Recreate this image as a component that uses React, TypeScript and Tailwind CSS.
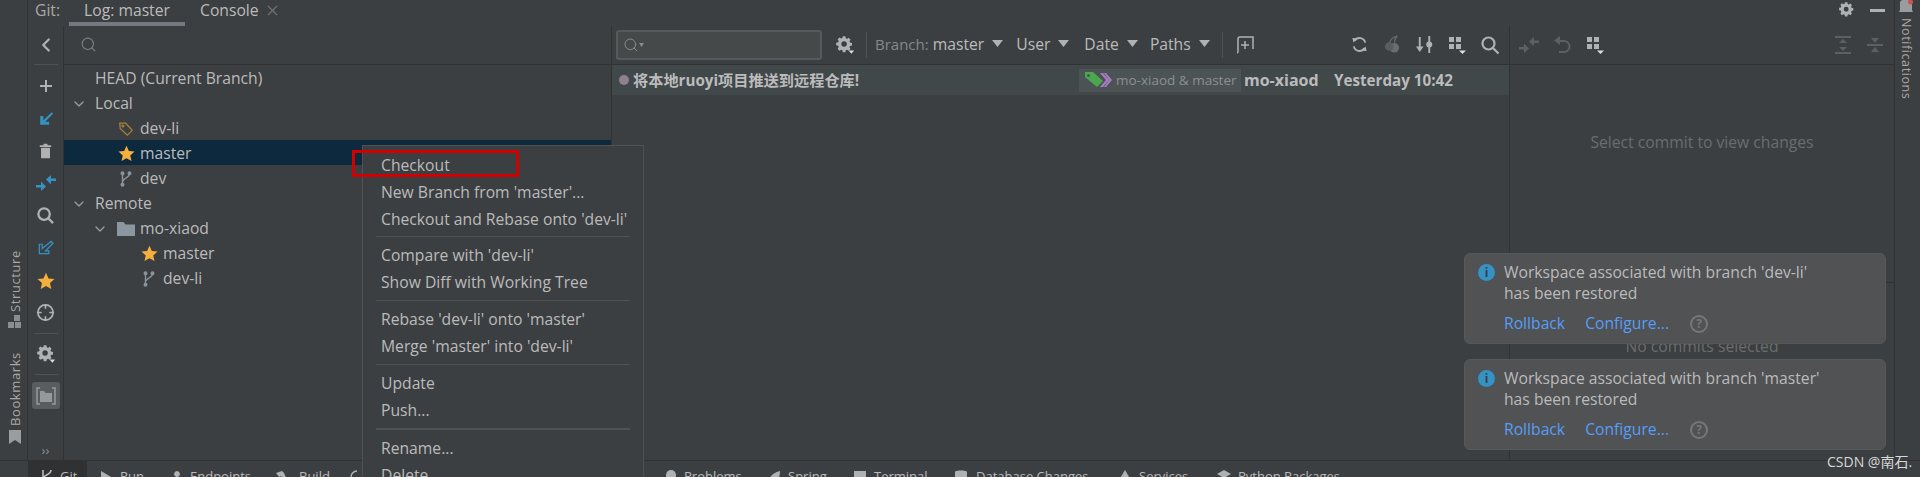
import { ChevronDown, ChevronLeft, Search } from "lucide-react";

const gray = "#afb1b3";
const blue = "#3592c4";

function Gear({ size = 18, color = gray, caret = false }: { size?: number; color?: string; caret?: boolean }) {
  return (
    <svg width={size} height={size} viewBox="0 0 22 22">
      <path
        fill={color}
        fillRule="evenodd"
        d="M8.6 1.5h2.8l.5 2.2 1.3.6 1.9-1.2 2 2-1.2 1.9.6 1.3 2.2.5v2.8l-2.2.5-.6 1.3 1.2 1.9-2 2-1.9-1.2-1.3.6-.5 2.2H8.6l-.5-2.2-1.3-.6-1.9 1.2-2-2L4.1 13l-.6-1.3-2.2-.5V8.4l2.2-.5.6-1.3-1.2-1.9 2-2 1.9 1.2 1.3-.6zM10 7a3 3 0 1 0 0 6 3 3 0 0 0 0-6z"
      />
      {caret && <path fill="#ddd" d="M15 17h6l-3 3.5z" />}
    </svg>
  );
}

function MergeIcon({ color }: { color: string }) {
  return (
    <svg width="20" height="18" viewBox="0 0 20 18">
      <path fill={color} d="M10 5.500L15 1v3.500h5v2.500h-5v3.500zM10 12.500L5 17v-3.500H0V11h5V7.500z" />
    </svg>
  );
}

function BranchIcon() {
  return (
    <svg width="14" height="18" viewBox="0 0 16 18" fill="none" stroke="#8a949c" strokeWidth="1.6">
      <path d="M4 3v12M12 3c0 5-7 4-8 9" />
      <circle cx="4" cy="2.5" r="1.5" fill="#8a949c" />
      <circle cx="4" cy="15.5" r="1.5" fill="#8a949c" />
      <circle cx="12" cy="2.5" r="1.5" fill="#8a949c" />
    </svg>
  );
}

function StarIcon({ size = 17 }: { size?: number }) {
  return (
    <svg width={size} height={size} viewBox="0 0 18 18">
      <path fill="#f4af3d" d="M9 .8l2.5 5.6 6 .6-4.5 4 1.3 6L9 13.9 3.7 17l1.3-6L.5 7l6-.6z" />
    </svg>
  );
}

function TagIcon() {
  return (
    <svg width="16" height="16" viewBox="0 0 18 18" fill="none" stroke="#a97f3c" strokeWidth="1.4">
      <path d="M2 2.5h6.5l7.5 8-5.500 5.500L2.500 8.500z" />
      <circle cx="5.500" cy="5.500" r="1" />
    </svg>
  );
}

function FolderIcon() {
  return (
    <svg width="18" height="15" viewBox="0 0 18 15">
      <path fill="#8a97a1" d="M0 1h6.500l2 2.500H18V15H0z" />
    </svg>
  );
}

function GridIcon({ color = gray }: { color?: string }) {
  return (
    <svg width="20" height="20" viewBox="0 0 20 20">
      <path fill={color} d="M2 2h5v5H2zM9 2h5v5H9zM2 9h5v5H2zM9 9h5v5H9z" />
      <path fill="#ddd" d="M12 15.500h7l-3.500 3.500z" />
    </svg>
  );
}

const leftTools = [
  <svg key="plus" width="16" height="16" viewBox="0 0 16 16"><path fill={gray} d="M7 2h2v5h5v2H9v5H7V9H2V7h5z" /></svg>,
  <svg key="update" width="16" height="16" viewBox="0 0 18 18"><path fill={blue} d="M15.500 1.500l1.500 1.500-9 9H12.500v3.500H2.500V5.500H6v5z" /></svg>,
  <svg key="trash" width="13" height="18" viewBox="0 0 16 20"><path fill={gray} d="M5.500 1h5v2H15v2H1V3h4.500zM2.500 6h11v13h-11z" /></svg>,
  <MergeIcon key="merge" color={blue} />,
  <svg key="search" width="19" height="19" viewBox="0 0 20 20" fill="none" stroke={gray} strokeWidth="2.400"><circle cx="8.500" cy="8.500" r="6" /><path d="M13 13l5 5" /></svg>,
  <svg key="checkout" width="17" height="17" viewBox="0 0 18 18" fill="none" stroke={blue} strokeWidth="1.300"><path d="M15 1.500l2 2-8 8h3.500v3H2.500V4.500h3v4.500z" /></svg>,
  <StarIcon key="star" size={18} />,
  <svg key="target" width="19" height="19" viewBox="0 0 20 20" fill="none" stroke={gray} strokeWidth="1.800"><circle cx="10" cy="10" r="8" /><path d="M10 1v5M10 14v5M1 10h5M14 10h5" /></svg>,
];

const logTools = [
  <svg key="refresh" width="17" height="17" viewBox="0 0 18 18" fill="none" stroke={gray} strokeWidth="2"><path d="M15 7A6 6 0 0 0 4 5M3 11a6 6 0 0 0 11 2" /><path fill={gray} stroke="none" d="M1.500 2l6 .5-5 4.500zM16.500 16l-6-.5 5-4.500z" /></svg>,
  <svg key="cherry" width="17" height="19" viewBox="0 0 18 20"><circle cx="11" cy="13.500" r="5" fill="#6a6c6e" /><circle cx="5.500" cy="12" r="4.500" fill="#5a5c5e" /><path fill="none" stroke="#6a6c6e" strokeWidth="1.300" d="M6 8c1-4 4-6 8-7M11 8c0-3 1-5 3-7" /></svg>,
  <svg key="sort" width="19" height="19" viewBox="0 0 20 20"><path fill={gray} d="M4 2h2v10h3l-4 6-4-6h3zM14 1h2v18h-2z" /><circle cx="15" cy="10" r="3.200" fill={gray} /></svg>,
  <GridIcon key="grid" />,
  <svg key="find" width="20" height="20" viewBox="0 0 20 20" fill="none" stroke={gray} strokeWidth="2.200"><circle cx="8.500" cy="8.500" r="6" /><path d="M13 13l5.500 5.500" /></svg>,
];

const tree = [
  { label: "HEAD (Current Branch)", indent: "pl-[31px]" },
  { label: "Local", indent: "pl-[31px]", chevron: "ml-[-24px] mr-[8px]" },
  { label: "dev-li", indent: "pl-[76px]", icon: <TagIcon /> },
  { label: "master", indent: "pl-[76px]", icon: <StarIcon />, selected: true },
  { label: "dev", indent: "pl-[76px]", icon: <BranchIcon /> },
  { label: "Remote", indent: "pl-[31px]", chevron: "ml-[-24px] mr-[8px]" },
  { label: "mo-xiaod", indent: "pl-[76px]", icon: <FolderIcon />, chevron: "ml-[-48px] mr-[32px]" },
  { label: "master", indent: "pl-[99px]", icon: <StarIcon /> },
  { label: "dev-li", indent: "pl-[99px]", icon: <BranchIcon /> },
];

const menuGroups = [
  { gap: "", items: ["Checkout", "New Branch from 'master'...", "Checkout and Rebase onto 'dev-li'"] },
  { gap: "mt-[3px] pt-[5px] border-t border-[#515151]", items: ["Compare with 'dev-li'", "Show Diff with Working Tree"] },
  { gap: "mt-[4px] pt-[5px] border-t border-[#515151]", items: ["Rebase 'dev-li' onto 'master'", "Merge 'master' into 'dev-li'"] },
  { gap: "mt-[4px] pt-[5px] border-t border-[#515151]", items: ["Update", "Push..."] },
  { gap: "mt-[4px] pt-[5px] border-t-2 border-[#515151]", items: ["Rename...", "Delete"] },
];

const bottomTabs = [
  { label: "Run", box: "w-[71px] ml-[12px]", icon: <path d="M2 1l11 6.500L2 14z" fill={gray} />, gap: "ml-[7px]" },
  { label: "Endpoints", box: "w-[105px]", icon: <path d="M7 1a3 3 0 0 1 1 5.800V10l4 3-1 1-4-3-4 3-1-1 4-3V6.800A3 3 0 0 1 7 1z" fill={gray} />, gap: "ml-[6px]" },
  { label: "Build", box: "w-[75px]", icon: <path d="M1 3l6-2 2 2 4 9-2 1-5-7-2 1z" fill={gray} />, gap: "ml-[10px]" },
  { label: "", box: "w-[314px]", icon: <path d="M7 1a6 6 0 1 0 0 12" fill="none" stroke={gray} strokeWidth="1.500" />, gap: "" },
  { label: "Problems", box: "w-[103px]", icon: <path d="M7 0a5 5 0 0 1 5 5v5a5 5 0 0 1-10 0V5a5 5 0 0 1 5-5z" fill={gray} />, gap: "ml-[6px]" },
  { label: "Spring", box: "w-[86px]", icon: <path d="M13 1c0 8-3 12-10 12C1 8 5 3 13 1z" fill={gray} />, gap: "ml-[7px]" },
  { label: "Terminal", box: "w-[101px]", icon: <path d="M1 1h12v13H1z" fill={gray} />, gap: "ml-[7px]" },
  { label: "Database Changes", box: "w-[164px]", icon: <path d="M1 2c0-2 12-2 12 0v11c0 2-12 2-12 0z" fill={gray} />, gap: "ml-[8px]" },
  { label: "Services", box: "w-[99px]", icon: <path d="M7 0l6 10a6 6 0 0 1-12 0z" fill={gray} />, gap: "ml-[7px]" },
  { label: "Python Packages", box: "", icon: <path d="M7 0l7 4-7 4-7-4zM0 7l7 4 7-4v3l-7 4-7-4z" fill={gray} />, gap: "ml-[7px]" },
];

function FilterLabel({ label, margin }: { label: string; margin: string }) {
  return (
    <div className={`flex items-center whitespace-nowrap text-[#bbbbbb] ${margin}`}>
      {label}
      <svg className="ml-[8px]" width="11" height="8" viewBox="0 0 11 8">
        <path fill={gray} d="M0 0h11L5.500 7z" />
      </svg>
    </div>
  );
}

function Notice({ branch }: { branch: string }) {
  return (
    <div className="flex h-[91px] rounded-[6px] border border-[#565859] bg-[#505254] pl-[13px] pt-[8px] text-[#bbbbbb]">
      <div className="mt-[2px] flex h-[17px] w-[17px] items-center justify-center rounded-full bg-[#3592c4] text-[12px] font-bold leading-none text-[#3c3f41]">
        i
      </div>
      <div className="ml-[9px] leading-[21px]">
        <p>Workspace associated with branch '{branch}'</p>
        <p>has been restored</p>
        <div className="mt-[9px] flex items-center text-[#589df6]">
          <span>Rollback</span>
          <span className="ml-[20px]">Configure...</span>
          <span className="ml-[21px] flex h-[18px] w-[18px] items-center justify-center rounded-full border-2 border-[#75787a] text-[12px] font-bold leading-none text-[#75787a]">
            ?
          </span>
        </div>
      </div>
    </div>
  );
}

export default function App() {
  return (
    <div className="relative flex h-[477px] w-[1920px] flex-col overflow-hidden bg-[#3c3f41] font-['Open_Sans','Noto_Sans_CJK_SC',sans-serif] text-[15.7px] text-[#bbbbbb]">
      <div className="flex h-[460px]">
        <div className="flex w-[28px] shrink-0 flex-col items-center border-r border-[#323232] pl-[2px] pt-[250px] text-[13px] tracking-[0.6px] text-[#a8a8a8]">
          <span className="h-[62px] rotate-180 leading-[16px] [writing-mode:vertical-rl]">Structure</span>
          <svg className="mt-[3px]" width="14" height="14" viewBox="0 0 14 14">
            <path fill="#8a8d8f" d="M6 0h6v6H6zM0 7h6v6H0zM7 7h6v6H7z" />
          </svg>
          <span className="mt-[30px] h-[67px] rotate-180 leading-[16px] [writing-mode:vertical-rl]">Bookmarks</span>
          <svg className="mt-[4px]" width="12" height="14" viewBox="0 0 12 14">
            <path fill="#9a9c9e" d="M0 0h12v14L6 10l-6 4z" />
          </svg>
        </div>

        <div className="flex min-w-0 flex-1 flex-col">
          <div className="flex h-[26px] shrink-0 items-start leading-[20px]">
            <span className="w-[41px] pl-[7px] text-[#a8a8a8]">Git:</span>
            <span className="h-[26px] w-[116px] border-b-4 border-[#747a80] text-center">Log: master</span>
            <span className="ml-[15px]">Console</span>
            <svg className="ml-[8px] mt-[5px]" width="11" height="11" viewBox="0 0 11 11" stroke="#6f7274" strokeWidth="1.200">
              <path d="M1 1l9 9M10 1l-9 9" />
            </svg>
            <div className="ml-auto mr-[9px] flex items-center gap-[14px] pt-[1px]">
              <Gear size={18} />
              <span className="h-[3px] w-[15px] bg-[#afb1b3]" />
            </div>
          </div>

          <div className="flex min-h-0 flex-1">
            <div className="flex w-[36px] shrink-0 flex-col items-center border-r border-[#323232]">
              <div className="flex h-[38px] w-full shrink-0 items-center justify-center">
                <ChevronLeft size={22} strokeWidth={2.5} color={gray} />
              </div>
              <div className="h-px w-[24px] shrink-0 bg-[#515151]" />
              <div className="mt-[5px] flex flex-col">
                {leftTools.map((tool) => (
                  <div key={tool.key} className="flex h-[32.4px] items-center justify-center">
                    {tool}
                  </div>
                ))}
              </div>
              <div className="mt-[4px] h-px w-[24px] shrink-0 bg-[#515151]" />
              <div className="mt-[4px] flex h-[32px] items-center justify-center">
                <Gear size={20} caret />
              </div>
              <div className="mt-[4px] h-px w-[24px] shrink-0 bg-[#515151]" />
              <div className="mt-[7px] flex h-[27px] w-[28px] items-center justify-center rounded-[3px] bg-[#5a5d5f]">
                <svg width="20" height="18" viewBox="0 0 20 18" fill="none" stroke="#96999b" strokeWidth="1.500">
                  <path d="M4 1H1v16h3M16 1h3v16h-3" />
                  <path fill="#96999b" stroke="none" d="M4 4h4l1.500 2H16v9H4z" />
                </svg>
              </div>
              <span className="mb-[2px] mt-auto text-[13px] leading-[16px] text-[#8f9193]">››</span>
            </div>

            <div className="w-[548px] shrink-0 border-r border-[#323232]">
              <div className="flex h-[39px] items-center border-b border-[#323232] pb-[1px] pl-[16px]">
                <Search size={17} color="#7d8082" strokeWidth={1.6} />
              </div>
              {tree.map((row, i) => (
                <div
                  key={i}
                  className={`flex h-[25px] items-center pt-[2px] ${row.indent} ${row.selected ? "bg-[#0d293e]" : ""}`}
                >
                  {row.chevron && <ChevronDown className={row.chevron} size={16} color="#9a9c9e" />}
                  {row.icon && (
                    <span className="ml-[-23px] mr-[5px] flex w-[18px] justify-center">{row.icon}</span>
                  )}
                  {row.label}
                </div>
              ))}
            </div>

            <div className="w-[898px] shrink-0 border-r border-[#323232]">
              <div className="flex h-[39px] items-center border-b border-[#323232] pb-[1px]">
                <div className="ml-[4px] flex h-[30px] w-[206px] items-center rounded-[3px] border-2 border-[#565a5c] bg-[#45494a] pl-[5px]">
                  <Search size={16} color="#8a8d8f" strokeWidth={1.5} />
                  <svg width="5" height="4" viewBox="0 0 5 4"><path fill="#8a8d8f" d="M0 0h5L2.500 4z" /></svg>
                </div>
                <div className="ml-[13px]">
                  <Gear size={20} caret />
                </div>
                <div className="ml-[11px] h-[26px] w-px bg-[#515151]" />
                <span className="ml-[8px] text-[15px] text-[#85888a]">Branch:</span>
                <FilterLabel label="master" margin="ml-[4px]" />
                <FilterLabel label="User" margin="ml-[13px]" />
                <FilterLabel label="Date" margin="ml-[15px]" />
                <FilterLabel label="Paths" margin="ml-[12px]" />
                <div className="ml-[12px] h-[26px] w-px bg-[#515151]" />
                <svg className="ml-[12px]" width="20" height="18" viewBox="0 0 20 18" fill="none" stroke={gray} strokeWidth="1.500">
                  <path d="M2 17c1 0 1-1 1-2V3c0-1 1-2 2-2h13v12M10 5v8M6 9h8" />
                </svg>
                <div className="ml-auto flex pr-[3px]">
                  {logTools.map((tool) => (
                    <div key={tool.key} className="flex h-[32px] w-[32.5px] items-center justify-center">
                      {tool}
                    </div>
                  ))}
                </div>
              </div>
              <div className="flex h-[30px] items-center bg-[#41484a] font-bold">
                <span className="ml-[7px] h-[10px] w-[10px] rounded-full bg-[#8d8290]" />
                <span className="ml-[4px] w-[446px] text-[15.2px]">将本地ruoyi项目推送到远程仓库!</span>
                <div className="flex h-[23px] w-[162px] items-center bg-[#4c5355] pl-[6px] text-[13.5px] font-normal text-[#8c8f91]">
                  <svg width="27" height="16" viewBox="0 0 27 16">
                    <path fill="#a87bc4" d="M19 1h2l6 7-6 7h-2l5-7z" />
                    <path fill="#a87bc4" d="M15 1h3l6 7-6 7h-3l6-7z" />
                    <path fill="#4ca64f" fillRule="evenodd" d="M0 0h8l10 9-6 6-12-10zM3.500 2a1.500 1.500 0 1 0 0 3 1.500 1.500 0 0 0 0-3z" />
                  </svg>
                  <span className="ml-[4px] whitespace-nowrap">mo-xiaod &amp; master</span>
                </div>
                <span className="ml-[3px] w-[90px] text-[16px]">mo-xiaod</span>
                <span className="text-[15.2px]">Yesterday 10:42</span>
              </div>
            </div>

            <div className="min-w-0 flex-1">
              <div className="flex h-[39px] items-center border-b border-[#323232] pb-[1px] pl-[2px] pr-[3px]">
                <div className="flex h-[32px] w-[33px] items-center justify-center">
                  <MergeIcon color="#5d5f61" />
                </div>
                <div className="flex h-[32px] w-[33px] items-center justify-center">
                  <svg width="18" height="18" viewBox="0 0 18 18" fill="none" stroke="#5d5f61" strokeWidth="2"><path d="M3 5h8a5 5 0 0 1 0 11H6" /><path fill="#5d5f61" stroke="none" d="M7 0v9L1 4.500z" /></svg>
                </div>
                <div className="flex h-[32px] w-[33px] items-center justify-center">
                  <GridIcon />
                </div>
                <div className="ml-auto flex h-[32px] w-[32px] items-center justify-center">
                  <svg width="18" height="20" viewBox="0 0 18 20"><path fill="#5d5f61" d="M1 1h16v2H1zM1 17h16v2H1zM9 4l4 4H5zM9 16l-4-4h8z" /></svg>
                </div>
                <div className="flex h-[32px] w-[32px] items-center justify-center">
                  <svg width="18" height="20" viewBox="0 0 18 20"><path fill="#5d5f61" d="M1 9h16v2H1zM9 8L5 3h8zM9 12l4 5H5z" /></svg>
                </div>
              </div>
              <div className="h-[218px] border-b border-[#323232] pt-[66px] text-center text-[#6a6d6f]">
                Select commit to view changes
              </div>
              <div className="pt-[52px] text-center text-[#6a6d6f]">No commits selected</div>
            </div>
          </div>
        </div>

        <div className="flex w-[26px] shrink-0 flex-col items-center border-l border-[#323232] pr-[3px] text-[12.5px] tracking-[0.6px] text-[#a8a8a8]">
          <svg width="14" height="15" viewBox="0 0 14 15">
            <path fill="#9a9c9e" d="M4 0h6a3 3 0 0 1 3 3v7l1 2H0l1-2V3a3 3 0 0 1 3-3z" />
            <circle cx="11.500" cy="2" r="2.500" fill="#c75450" />
          </svg>
          <span className="mt-[3px] leading-[16px] [writing-mode:vertical-rl]">Notifications</span>
        </div>
      </div>

      <div className="flex h-[17px] shrink-0 overflow-hidden border-t border-[#323232] text-[13px] leading-[17px]">
        <div className="ml-[28px] flex h-[30px] w-[59px] items-start bg-[#2f3133] pl-[12px] pt-[7px]">
          <svg width="14" height="16" viewBox="0 0 14 16" stroke="#bbbbbb" strokeWidth="1.600" fill="none">
            <path d="M3 2v12M11 2c0 5-6 4-8 8" />
          </svg>
          <span className="ml-[6px]">Git</span>
        </div>
        {bottomTabs.map((tab, i) => (
          <div key={i} className={`flex h-[30px] shrink-0 items-start whitespace-nowrap pt-[7px] ${tab.box}`}>
            <svg className="mt-[2px] shrink-0" width="14" height="14" viewBox="0 0 14 14">
              {tab.icon}
            </svg>
            {tab.label && <span className={tab.gap}>{tab.label}</span>}
          </div>
        ))}
      </div>

      <div className="absolute left-[362px] top-[145px] h-[340px] w-[282px] border border-[#515151] bg-[#3c3f41] px-[13px] pt-[6px]">
        {menuGroups.map((group, i) => (
          <div key={i} className={group.gap}>
            {group.items.map((label) => (
              <div key={label} className="flex h-[27px] items-center whitespace-nowrap pl-[5px]">
                {label}
              </div>
            ))}
          </div>
        ))}
      </div>

      <div className="absolute left-[352px] top-[150px] h-[27px] w-[167px] border-[3px] border-[#d40000]" />

      <div className="absolute left-[1464px] top-[253px] flex w-[422px] flex-col gap-[15px]">
        <Notice branch="dev-li" />
        <Notice branch="master" />
      </div>

      <span className="absolute left-[1827px] top-[451px] text-[14px] text-[#d8d8d8]">CSDN @南石.</span>
    </div>
  );
}
